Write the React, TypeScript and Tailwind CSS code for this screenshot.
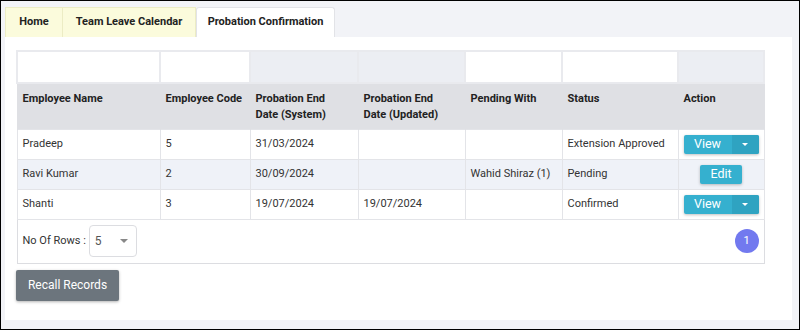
import React from "react";

const cols = [143, 90, 108, 107, 97, 116, 86];
const filterBg = ["bg-white", "bg-white", "bg-[#eceef3]", "bg-[#eceef3]", "bg-white", "bg-white", "bg-[#eceef3]"];

function ViewBtn() {
  return (
    <div className="mx-auto flex h-[19px] w-[75px] rounded-[2px] bg-[#35b0cf] text-white shadow-[0_1px_3px_rgba(0,0,0,0.25)]">
      <div className="flex flex-1 items-center justify-center text-[12.5px]">View</div>
      <div className="flex w-[27px] items-center justify-center bg-[#2fa3c1] rounded-r-[2px]">
        <div className="h-0 w-0 border-x-[3px] border-t-[3px] border-x-transparent border-t-white" />
      </div>
    </div>
  );
}

export default function App() {
  const rows = [
    { name: "Pradeep", code: "5", sys: "31/03/2024", upd: "", pend: "", status: "Extension Approved", action: "view", bg: "bg-white" },
    { name: "Ravi Kumar", code: "2", sys: "30/09/2024", upd: "", pend: "Wahid Shiraz (1)", status: "Pending", action: "edit", bg: "bg-[#eff2f8]" },
    { name: "Shanti", code: "3", sys: "19/07/2024", upd: "19/07/2024", pend: "", status: "Confirmed", action: "view", bg: "bg-white" },
  ];
  const headers: React.ReactNode[] = [
    "Employee Name",
    "Employee Code",
    <>Probation End<br />Date (System)</>,
    <>Probation End<br />Date (Updated)</>,
    "Pending With",
    "Status",
    "Action",
  ];
  const td = "h-[30px] border border-[#e3e4e8] px-[5px] py-0 align-middle whitespace-nowrap";
  return (
    <div className="h-[330px] w-[800px] overflow-hidden border border-black bg-[#f2f3f7] font-['Roboto',sans-serif] text-[11px] text-[#333]">
      <div className="px-[4px] pt-[6px]">
        <div className="flex h-[30px] items-stretch font-bold text-[11px] text-[#222]">
          <div className="flex w-[58px] items-center justify-center border border-b-0 border-[#ececc4] bg-[#fbfbdc]">Home</div>
          <div className="flex w-[133px] items-center justify-center border border-b-0 border-l-0 border-[#ececc4] bg-[#fbfbdc]">Team Leave Calendar</div>
          <div className="flex w-[139px] items-center justify-center rounded-t-[3px] border border-b-0 border-[#e2e3e7] bg-white">Probation Confirmation</div>
        </div>
        <div className="h-[283px] w-[787px] bg-white px-[11px] pt-[13px]">
          <table className="table-fixed border-collapse" style={{ width: 747 }}>
            <colgroup>
              {cols.map((w, i) => (
                <col key={i} style={{ width: w }} />
              ))}
            </colgroup>
            <tbody>
              <tr>
                {filterBg.map((b, i) => (
                  <td key={i} className={`h-[32px] border-[2px] border-[#e9eaee] p-0 ${b}`} />
                ))}
              </tr>
              <tr className="bg-[#dfe0e4] font-bold text-[#222]">
                {headers.map((h, i) => (
                  <td key={i} className="h-[46px] whitespace-nowrap border-x border-[#dfe0e4] px-[5px] pt-[7px] pb-0 align-top leading-[16px]">{h}</td>
                ))}
              </tr>
              {rows.map((r, i) => (
                <tr key={i} className={r.bg}>
                  <td className={td}>{r.name}</td>
                  <td className={td}>{r.code}</td>
                  <td className={td}>{r.sys}</td>
                  <td className={td}>{r.upd}</td>
                  <td className={td}>{r.pend}</td>
                  <td className={td}>{r.status}</td>
                  <td className={`${td} px-0`}>
                    {r.action === "view" ? (
                      <ViewBtn />
                    ) : (
                      <div className="mx-auto flex h-[19px] w-[42px] items-center justify-center rounded-[2px] bg-[#35b0cf] text-[12.5px] text-white shadow-[0_1px_3px_rgba(0,0,0,0.25)]">Edit</div>
                    )}
                  </td>
                </tr>
              ))}
              <tr>
                <td colSpan={7} className="h-[44px] border border-[#dcdde1] px-[5px] py-0">
                  <div className="flex items-center justify-between">
                    <div className="flex items-center">
                      <span>No Of Rows :</span>
                      <div className="ml-[3px] flex h-[32px] w-[48px] items-center justify-between rounded-[4px] border border-[#dcdde1] pl-[5px] pr-[8px] text-[12px] text-[#555]">
                        <span>5</span>
                        <div className="h-0 w-0 border-x-[4px] border-t-[4px] border-x-transparent border-t-[#888]" />
                      </div>
                    </div>
                    <div className="flex h-[24px] w-[24px] items-center justify-center rounded-full bg-[#7279ef] text-[11px] text-white">1</div>
                  </div>
                </td>
              </tr>
            </tbody>
          </table>
          <button className="mt-[6px] h-[31px] w-[103px] rounded-[2px] bg-[#6c757d] text-[12px] text-white shadow-[0_1px_3px_rgba(0,0,0,0.3)]">Recall Records</button>
        </div>
      </div>
    </div>
  );
}
